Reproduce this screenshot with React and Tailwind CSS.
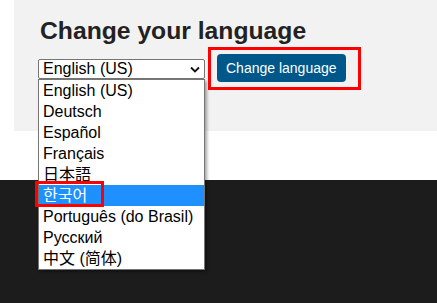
import React from "react";

const options = [
  "English (US)",
  "Deutsch",
  "Español",
  "Français",
  "日本語",
  "한국어",
  "Português (do Brasil)",
  "Русский",
  "中文 (简体)",
];

export default function App() {
  return (
    <div className="relative w-[437px] h-[303px] overflow-hidden bg-white font-['Liberation_Sans','Arial','Noto_Sans_CJK_KR','Noto_Sans_CJK_JP','Noto_Sans_CJK_SC',sans-serif]">
      <div className="ml-[14px] h-[131px] bg-[#f2f2f2] pl-[24px] pt-[17px]">
        <h1 className="ml-[2px] text-[24.7px] font-bold leading-[28px] text-[#222222]">
          Change your language
        </h1>
        <div className="mt-[9px] flex items-start gap-[12px]">
          <div className="relative mt-[5px] flex h-[20px] w-[167px] items-center justify-between rounded-[2px] border border-[#767676] bg-white pl-[4px] pr-[3px] text-[16px] leading-[18px] text-black">
            <span>English (US)</span>
            <svg width="10" height="7" viewBox="0 0 10 7" className="mr-[1px]">
              <path d="M1 1.5 L5 5.5 L9 1.5" fill="none" stroke="#111" strokeWidth="1.8" />
            </svg>
            <div className="absolute left-[-1px] top-[19px] z-10 w-[167px] border border-[#767676] bg-white shadow-[2px_2px_3px_rgba(0,0,0,0.35)]">
              {options.map((o, i) => (
                <div
                  key={o}
                  className={
                    i === 5
                      ? "h-[21px] bg-[#1e90ff] pl-[4px] text-[16px] leading-[21px] text-white"
                      : "h-[21px] pl-[4px] text-[16px] leading-[21px] text-black"
                  }
                >
                  {o}
                </div>
              ))}
              <div className="absolute left-[-4px] top-[101px] h-[26px] w-[69px] border-[3px] border-[#ff0000]" />
            </div>
          </div>
          <div className="relative">
            <button className="h-[28px] rounded-[4px] bg-[#00588a] px-[9px] text-[14px] leading-[28px] text-white">
              Change language
            </button>
            <div className="absolute left-[-9px] top-[-7px] h-[43px] w-[153px] border-[3px] border-[#ff0000]" />
          </div>
        </div>
      </div>
      <div className="h-[49px] bg-white" />
      <div className="h-[123px] bg-[#1c1c1c]" />
    </div>
  );
}
